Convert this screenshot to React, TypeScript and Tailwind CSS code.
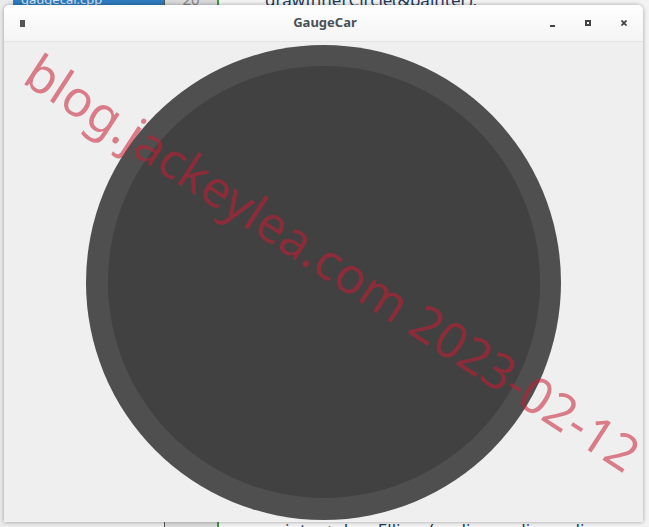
import React from 'react';

// Editor content peeking out around the window
function EditorBackdrop() {
  return (
    <div className="absolute inset-0 flex bg-[#f3f3f3]" style={{ fontFamily: '"Noto Sans", sans-serif' }}>
      <div className="w-[165px] flex flex-col bg-[#ebebeb] border-r border-[#555]">
        <div className="h-[6px] ml-[13px] bg-[#2f7cbf] overflow-hidden text-[13px] leading-none text-white/80 pl-2">
          <div className="-mt-[7px]">gaugecar.cpp</div>
        </div>
      </div>
      <div className="w-[52px] bg-[#dadada] flex flex-col items-center text-[15px] leading-none text-[#888]">
        <div className="h-[6px] overflow-hidden">
          <div className="-mt-[8px]">20</div>
        </div>
      </div>
      <div className="w-[2px] bg-[#3c9a3c]" />
      <div className="flex-1 flex flex-col pl-[46px] text-[17px] leading-none text-[#1f3b5a]">
        <div className="h-[6px] overflow-hidden">
          <div className="-mt-[9px]">drawInnerCircle(&amp;painter);</div>
        </div>
        <div className="flex-1" />
        <div className="h-[6px] overflow-hidden">
          <div>painter-&gt;drawEllipse(-radius,-radius,radius</div>
        </div>
      </div>
    </div>
  );
}

function TitleBar() {
  return (
    <div className="h-[37px] grid grid-cols-[1fr_auto_1fr] items-center px-4 bg-gradient-to-b from-white to-[#f4f4f4] rounded-t-[5px] border-b border-[#e4e4e4]">
      <div className="w-[5px] h-[7px] bg-[#555]" />
      <div className="text-[13px] font-bold text-[#4a5157] pl-[3px]">GaugeCar</div>
      <div className="flex items-center justify-end gap-[30px] pr-0">
        <div className="w-[5px] h-[2px] bg-[#444] mt-[5px]" />
        <div className="w-[6px] h-[6px] border-2 border-[#444]" />
        <svg width="6" height="6" viewBox="0 0 6 6" className="text-[#444]">
          <path d="M0.5 0.5 L5.5 5.5 M5.5 0.5 L0.5 5.5" stroke="currentColor" strokeWidth="1.8" />
        </svg>
      </div>
    </div>
  );
}

function Gauge() {
  return (
    <div className="w-[475px] h-[475px] rounded-full bg-[#4f4f4f] flex items-center justify-center">
      <div className="w-[432px] h-[432px] rounded-full bg-[#414141]" />
    </div>
  );
}

export default function App() {
  return (
    <div className="relative w-[649px] h-[527px] overflow-hidden" style={{ fontFamily: '"Noto Sans", sans-serif' }}>
      <EditorBackdrop />
      <div className="relative ml-[4px] pt-[5px]">
        <div className="w-[639px] h-[517px] flex flex-col rounded-t-[6px] bg-[#efefef] shadow-[0_0_4px_rgba(0,0,0,0.35)]">
          <TitleBar />
          <div className="flex-1 flex items-center justify-center">
            <Gauge />
          </div>
        </div>
      </div>
      {/* watermark */}
      <div className="absolute left-[333px] top-[262px] -translate-x-1/2 -translate-y-1/2 rotate-[33deg] whitespace-nowrap text-[50px] leading-none text-[rgba(200,30,50,0.55)] pointer-events-none">
        blog.jackeylea.com 2023-02-12
      </div>
    </div>
  );
}
